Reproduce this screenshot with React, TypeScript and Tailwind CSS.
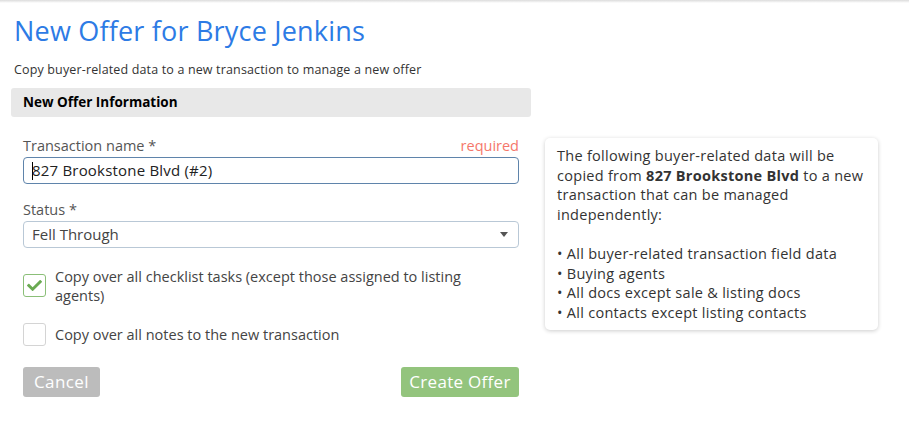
import { FaCheck } from "react-icons/fa";

const font = { fontFamily: "'Open Sans', 'Liberation Sans', sans-serif" };

export default function App() {
  return (
    <div className="min-h-screen bg-white text-[#333]" style={font}>
      <div className="h-[3px] bg-gradient-to-b from-[#dcdcdc] to-white" />
      <div className="pl-[11px]">
        <h1 className="pl-[3px] pt-[11px] text-[27px] leading-[34px] tracking-[0.2px] text-[#2d7be5]">
          New Offer for Bryce Jenkins
        </h1>
        <p className="pl-[3px] mt-[13px] text-[12.5px] leading-[18px] tracking-[0.15px] text-[#333]">
          Copy buyer-related data to a new transaction to manage a new offer
        </p>
        <div className="flex mt-[9px]">
          <div className="w-[520px]">
            <div className="h-[29px] rounded-[3px] bg-[#e8e8e8] pl-3 flex items-center text-[13.5px] font-bold text-black">
              New Offer Information
            </div>
            <div className="pl-3 w-[508px]">
              <div className="mt-[19px] flex justify-between text-[14.5px] leading-[20px]">
                <span className="text-[#555]">Transaction name *</span>
                <span className="text-[#f5776b]">required</span>
              </div>
              <div className="mt-[1px] h-[27px] rounded-[4px] border border-[#5f84ab] px-2 flex items-center text-[15px] tracking-[0.2px] text-[#222]">
                <span className="w-px h-[18px] bg-black -mr-px" />
                827 Brookstone Blvd (#2)
              </div>
              <div className="mt-[16px] text-[14.5px] leading-[20px] text-[#555]">Status *</div>
              <div className="mt-[1px] h-[27px] rounded-[4px] border border-[#b9c8d6] pl-2 pr-[10px] flex items-center justify-between text-[15px] text-[#444]">
                <span>Fell Through</span>
                <span className="w-0 h-0 border-l-[4px] border-r-[4px] border-t-[5px] border-l-transparent border-r-transparent border-t-[#555]" />
              </div>
              <div className="mt-[26px] flex items-start gap-[9px]">
                <div className="w-[23px] h-[23px] shrink-0 rounded-[3px] border border-[#8bbf78] flex items-center justify-center">
                  <FaCheck className="w-[15px] h-[15px] text-[#6aaa52]" />
                </div>
                <span className="max-w-[430px] text-[14.5px] leading-[19px] text-[#444] -mt-[7px]">
                  Copy over all checklist tasks (except those assigned to listing agents)
                </span>
              </div>
              <div className="mt-[18px] flex items-center gap-[9px]">
                <div className="w-[23px] h-[23px] shrink-0 rounded-[3px] border border-[#d4d4d4]" />
                <span className="text-[14.5px] leading-[19px] text-[#444]">
                  Copy over all notes to the new transaction
                </span>
              </div>
              <div className="mt-[21px] flex justify-between">
                <button className="h-[30px] w-[77px] rounded-[3px] bg-[#bcbcbc] text-white text-[17px] tracking-[0.4px]">
                  Cancel
                </button>
                <button className="h-[30px] w-[118px] rounded-[3px] bg-[#93c47d] text-white text-[17px] tracking-[0.3px]">
                  Create Offer
                </button>
              </div>
            </div>
          </div>
          <div className="ml-[14px] mt-[50px] w-[333px] self-start rounded-[5px] bg-white shadow-[0_1px_4px_rgba(0,0,0,0.2)] px-3 pt-[8px] pb-[8px] text-[14.5px] leading-[19.6px] tracking-[0.28px] text-[#333]">
            <p>
              The following buyer-related data will be
              <br />
              copied from <b className="font-bold">827 Brookstone Blvd</b> to a new
              <br />
              transaction that can be managed
              <br />
              independently:
            </p>
            <ul className="mt-[19.6px]">
              <li>• All buyer-related transaction field data</li>
              <li>• Buying agents</li>
              <li>• All docs except sale &amp; listing docs</li>
              <li>• All contacts except listing contacts</li>
            </ul>
          </div>
        </div>
      </div>
    </div>
  );
}
